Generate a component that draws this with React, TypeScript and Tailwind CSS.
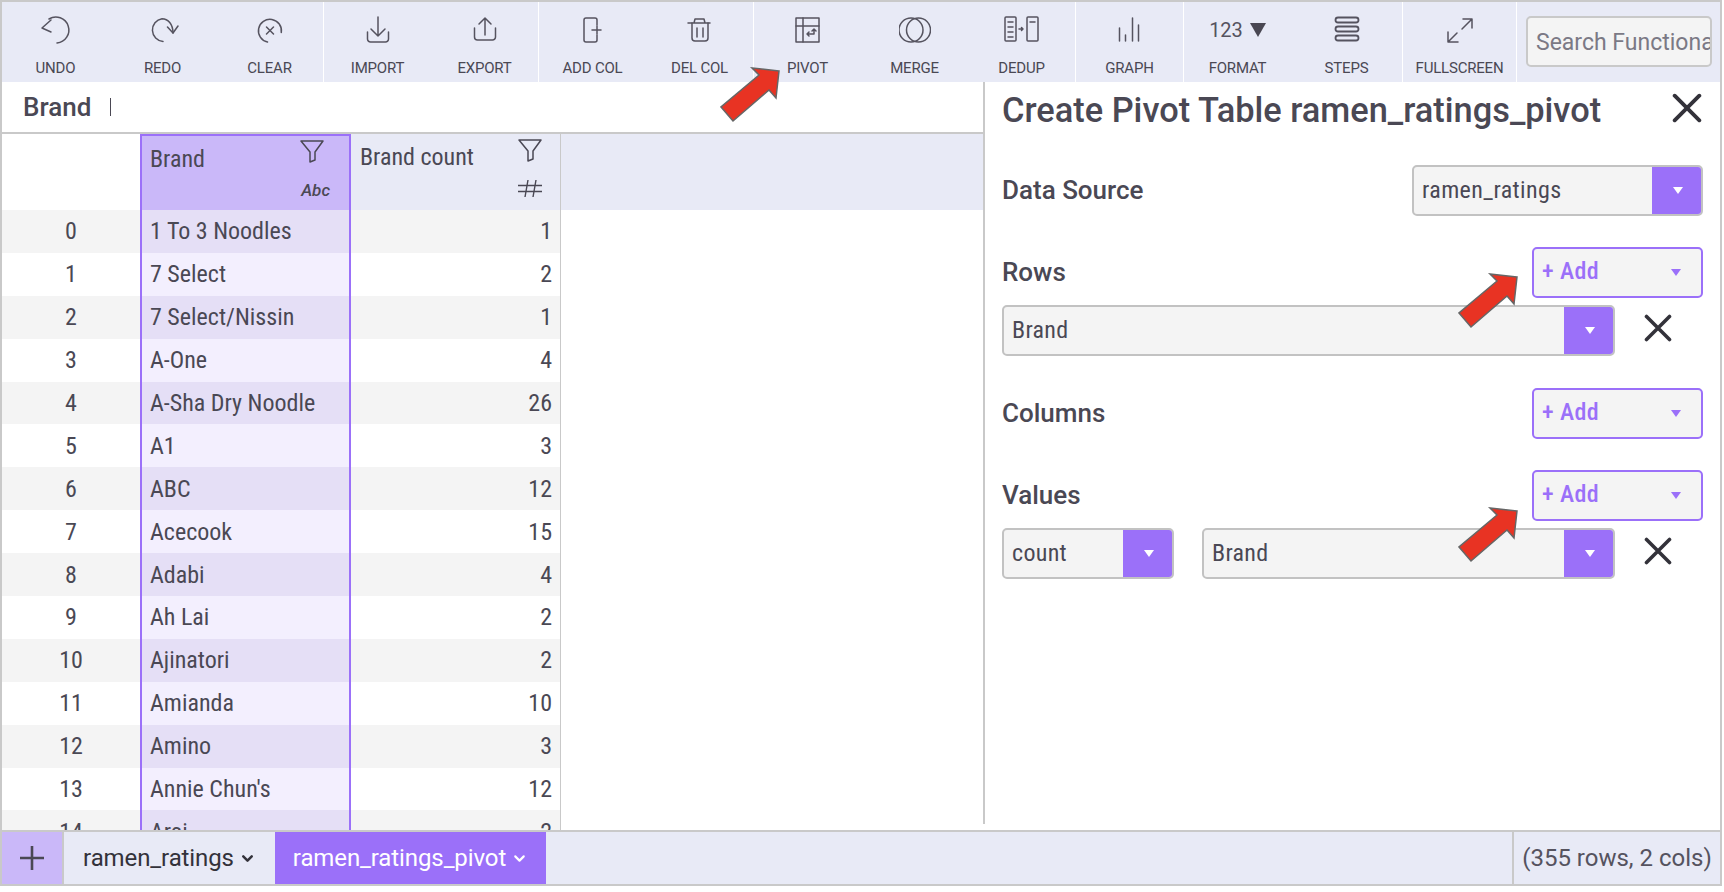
import { ChevronDown } from "lucide-react";
import type { ReactNode } from "react";

const font = "[font-family:Roboto,'Liberation_Sans',sans-serif]";

function Svg({ children, w = 32 }: { children: ReactNode; w?: number }) {
  return (
    <svg width={w} height={32} viewBox={`0 0 ${w} 32`} fill="none" stroke="#55535f" strokeWidth="1.5" strokeLinecap="round" strokeLinejoin="round">
      {children}
    </svg>
  );
}

const icons: Record<string, ReactNode> = {
  UNDO: (
    <Svg>
      <path d="M9 5 A13 13 0 1 1 17 29" />
      <path d="M11 6 L2 14 L11 18" />
    </Svg>
  ),
  REDO: (
    <Svg>
      <path d="M26 19 C26 10 21 4.7 15 4.7 A11.5 11.5 0 0 0 16 27.5" />
      <path d="M20.5 13 L26 19 L31 12" />
    </Svg>
  ),
  CLEAR: (
    <Svg>
      <path d="M27.3 18.5 A11.5 11.5 0 1 0 13.5 28" />
      <path d="M12.5 13 L19.5 20 M19.5 13 L12.5 20" />
    </Svg>
  ),
  IMPORT: (
    <Svg>
      <path d="M16 3 V22 M9 15 L16 22 L23 15" />
      <path d="M5.5 18 V25 a3 3 0 0 0 3 3 H23.5 a3 3 0 0 0 3 -3 V18" />
    </Svg>
  ),
  EXPORT: (
    <Svg>
      <path d="M16 21 V4 M10 10 L16 4 L22 10" />
      <path d="M5.5 14 V23 a3 3 0 0 0 3 3 H23.5 a3 3 0 0 0 3 -3 V14" />
    </Svg>
  ),
  "ADD COL": (
    <Svg>
      <path d="M20 11 V6 a2 2 0 0 0 -2 -2 H9 a2 2 0 0 0 -2 2 V26 a2 2 0 0 0 2 2 H18 a2 2 0 0 0 2 -2 V21" />
      <path d="M15 16 H24 M20 12 V20" />
    </Svg>
  ),
  "DEL COL": (
    <Svg>
      <path d="M4 9 H26 M10 9 L11 5 H20 L21 9" />
      <path d="M8 9 V24 a3 3 0 0 0 3 3 H21 a3 3 0 0 0 3 -3 V9" />
      <path d="M13 14 V23 M19 14 V23" />
    </Svg>
  ),
  PIVOT: (
    <Svg>
      <rect x="4" y="4" width="23" height="24" />
      <path d="M4 12 H27 M11 4 V28" />
      <path d="M22 15 V20 H15 M17 18 L15 20 L17 22 M20 17 L22 15 L24 17" />
    </Svg>
  ),
  MERGE: (
    <Svg>
      <circle cx="12" cy="16" r="12" />
      <circle cx="19.5" cy="16" r="12" />
    </Svg>
  ),
  DEDUP: (
    <Svg w={36}>
      <rect x="1" y="3" width="11" height="24" rx="1" />
      <rect x="23" y="3" width="11" height="24" rx="1" />
      <path d="M4 8 H9 M4 13 H9 M4 18 H9 M4 23 H9 M26 8 H31" />
      <path d="M15 15 H19 M17.5 13.5 L19 15 L17.5 16.5" />
    </Svg>
  ),
  GRAPH: (
    <Svg>
      <path d="M5.5 27 V14 M11.5 27 V21 M18.5 27 V4 M24.5 27 V11" />
    </Svg>
  ),
  STEPS: (
    <Svg>
      <rect x="4.5" y="3.5" width="23" height="5" rx="2.5" strokeWidth="1.8" />
      <rect x="4.5" y="12.5" width="23" height="5" rx="2.5" strokeWidth="1.8" />
      <rect x="4.5" y="21.5" width="23" height="5" rx="2.5" strokeWidth="1.8" />
    </Svg>
  ),
  FULLSCREEN: (
    <Svg>
      <path d="M28 5 L18 15 M19 5 H28 V14" />
      <path d="M4 28 L13 19 M4 18 V28 H14" />
    </Svg>
  ),
};

function ToolItem({ label, width = "w-[107px]" }: { label: string; width?: string }) {
  return (
    <div className={`flex shrink-0 flex-col items-center ${width}`}>
      <div className="flex h-[55px] items-center justify-center">
        {label === "FORMAT" ? (
          <div className="flex items-center gap-[7px] text-[20px] text-[#55535f]">
            <span>123</span>
            <span className="h-0 w-0 border-x-[8px] border-t-[14px] border-x-transparent border-t-[#494752]" />
          </div>
        ) : (
          icons[label]
        )}
      </div>
      <div className="text-[15px] leading-[22px] tracking-[-0.2px] text-[#4a4854]">{label}</div>
    </div>
  );
}

function Sep() {
  return <div className="h-full w-px shrink-0 bg-white" />;
}

function Toolbar() {
  return (
    <div className="flex h-[80px] shrink-0 items-stretch bg-[#e8eaf6]">
      <div className="flex"><ToolItem label="UNDO" /><ToolItem label="REDO" /><ToolItem label="CLEAR" /></div>
      <Sep />
      <div className="flex"><ToolItem label="IMPORT" /><ToolItem label="EXPORT" /></div>
      <Sep />
      <div className="flex"><ToolItem label="ADD COL" /><ToolItem label="DEL COL" /></div>
      <Sep />
      <div className="flex"><ToolItem label="PIVOT" /><ToolItem label="MERGE" /><ToolItem label="DEDUP" /></div>
      <Sep />
      <ToolItem label="GRAPH" />
      <Sep />
      <div className="flex"><ToolItem label="FORMAT" /><ToolItem label="STEPS" width="w-[111px]" /></div>
      <Sep />
      <ToolItem label="FULLSCREEN" width="w-[113px]" />
      <Sep />
      <div className="ml-[9px] mt-[14px] flex h-[51px] w-[186px] items-center overflow-hidden rounded-[5px] border-2 border-[#c9c9c9] bg-[#f4f4f4] pl-[8px] pt-[3px] text-[23px] whitespace-nowrap text-[#7b7985]">
        Search Functionality
      </div>
    </div>
  );
}

const rows: [number, string, number][] = [
  [0, "1 To 3 Noodles", 1],
  [1, "7 Select", 2],
  [2, "7 Select/Nissin", 1],
  [3, "A-One", 4],
  [4, "A-Sha Dry Noodle", 26],
  [5, "A1", 3],
  [6, "ABC", 12],
  [7, "Acecook", 15],
  [8, "Adabi", 4],
  [9, "Ah Lai", 2],
  [10, "Ajinatori", 2],
  [11, "Amianda", 10],
  [12, "Amino", 3],
  [13, "Annie Chun's", 12],
  [14, "Arai", 2],
];

function FilterIcon() {
  return (
    <svg width="24" height="24" viewBox="0 0 24 24" fill="none" stroke="#4a4854" strokeWidth="1.5" strokeLinejoin="round">
      <path d="M1 2 H23 L15 13 V21 L10 23 V13 Z" />
    </svg>
  );
}

function Grid() {
  return (
    <div className="flex min-w-0 flex-1 flex-col overflow-hidden">
      <div className="flex h-[50px] shrink-0 items-center gap-[19px] pl-[21px] text-[#4a4854]">
        <span className="text-[26px] font-medium [font-stretch:88%]">Brand</span>
        <span className="h-[18px] w-px bg-[#4a4854]" />
      </div>
      <div className="h-[2px] shrink-0 bg-[#c9c9c9]" />
      <div className="flex h-[76px] shrink-0">
        <div className="w-[138px] shrink-0 bg-white" />
        <div className="flex w-[211px] shrink-0 flex-col border-2 border-b-0 border-[#9b70f9] bg-[#cab8f9] pl-[8px] text-[#4a4854]">
          <div className="flex items-start justify-between pt-[3px]">
            <span className="mt-[6px] text-[24px] leading-[28px] [font-stretch:85%]">Brand</span>
            <div className="mr-[25px]"><FilterIcon /></div>
          </div>
          <span className="mr-[19px] mt-[9px] self-end text-[17px] font-medium italic leading-none">Abc</span>
        </div>
        <div className="flex w-[210px] shrink-0 flex-col border-r border-[#c9c9c9] bg-[#e8eaf6] pl-[9px] text-[#4a4854]">
          <div className="flex items-start justify-between pt-[4px]">
            <span className="mt-[5px] text-[24px] leading-[28px] [font-stretch:85%]">Brand count</span>
            <div className="mr-[18px]"><FilterIcon /></div>
          </div>
          <svg className="mr-[18px] mt-[9px] self-end" width="24" height="17" viewBox="0 0 24 17" fill="none" stroke="#4a4854" strokeWidth="1.4">
            <path d="M0 5.5 H24 M0 11.5 H24 M10 0 L7 17 M18 0 L15 17" />
          </svg>
        </div>
        <div className="flex-1 bg-[#e8eaf6]" />
      </div>
      <div className="flex-1 overflow-hidden">
        {rows.map(([i, brand, count]) => {
          const even = i % 2 === 0;
          return (
            <div key={i} className="flex h-[42.9px] text-[24px] text-[#4a4854] [font-stretch:85%]">
              <div className={`flex w-[138px] shrink-0 items-center justify-center ${even ? "bg-[#f4f4f4]" : "bg-white"}`}>{i}</div>
              <div className={`flex w-[211px] shrink-0 items-center border-x-2 border-[#9b70f9] pl-[8px] ${even ? "bg-[#e5dff6]" : "bg-[#f3effe]"}`}>{brand}</div>
              <div className={`flex w-[210px] shrink-0 items-center justify-end border-r border-[#c9c9c9] pr-[8px] ${even ? "bg-[#f4f4f4]" : "bg-white"}`}>{count}</div>
            </div>
          );
        })}
      </div>
    </div>
  );
}

function Caret({ color = "#ffffff" }: { color?: string }) {
  return <span className="h-0 w-0 border-x-[5px] border-t-[7px] border-x-transparent" style={{ borderTopColor: color }} />;
}

function Select({ value, className, textClass = "tracking-[0.3px]" }: { value: string; className: string; textClass?: string }) {
  return (
    <div className={`flex h-[51px] overflow-hidden rounded-[5px] border-2 border-[#c2c2c2] bg-[#f4f4f4] ${className}`}>
      <span className={`flex flex-1 items-center pb-[2px] pl-[8px] text-[24px] text-[#4a4854] [font-stretch:85%] ${textClass}`}>{value}</span>
      <span className="-my-[2px] -mr-[2px] flex w-[51px] items-center justify-center rounded-r-[5px] bg-[#9b70f9]">
        <Caret />
      </span>
    </div>
  );
}

function AddButton() {
  return (
    <div className="flex h-[51px] w-[171px] items-center justify-between rounded-[5px] border-2 border-[#9b70f9] bg-[#f4f4f4] pl-[8px] pr-[20px] text-[24px] font-medium tracking-[0.4px] text-[#9b70f9] [font-stretch:87%]">
      <span className="pb-[3px]">+ Add</span>
      <Caret color="#9b70f9" />
    </div>
  );
}

function CloseX({ size = 28 }: { size?: number }) {
  return (
    <svg width={size} height={size} viewBox="0 0 28 28" stroke="#33323a" strokeWidth="3.6" strokeLinecap="round">
      <path d="M2.5 2.5 L25.5 25.5 M25.5 2.5 L2.5 25.5" />
    </svg>
  );
}

const labelClass = "text-[26px] font-medium [font-stretch:88%]";

function Panel() {
  return (
    <div className="mb-[6px] flex w-[737px] shrink-0 flex-col border-l-2 border-[#c9c9c9] pl-[17px] pr-[17px] text-[#4a4854]">
      <div className="flex h-[53px] items-center justify-between pt-[4px]">
        <h1 className="text-[34.4px] font-medium leading-none whitespace-nowrap [font-stretch:88%]">Create Pivot Table ramen_ratings_pivot</h1>
        <div className="-mt-[6px] pr-[1px]"><CloseX size={30} /></div>
      </div>
      <div className="mt-[30px] flex items-center justify-between">
        <span className={labelClass}>Data Source</span>
        <Select value="ramen_ratings" className="w-[291px]" textClass="tracking-[0.4px]" />
      </div>
      <div className="mt-[31px] flex items-center justify-between">
        <span className={labelClass}>Rows</span>
        <AddButton />
      </div>
      <div className="mt-[7px] flex items-center">
        <Select value="Brand" className="w-[613px]" />
        <div className="-mt-[5px] ml-[29px] flex"><CloseX /></div>
      </div>
      <div className="mt-[32px] flex items-center justify-between">
        <span className={labelClass}>Columns</span>
        <AddButton />
      </div>
      <div className="mt-[31px] flex items-center justify-between">
        <span className={labelClass}>Values</span>
        <AddButton />
      </div>
      <div className="mt-[7px] flex items-center">
        <Select value="count" className="w-[172px]" />
        <Select value="Brand" className="ml-[28px] w-[413px]" />
        <div className="-mt-[5px] ml-[29px] flex"><CloseX /></div>
      </div>
    </div>
  );
}

function Footer() {
  return (
    <div className="flex h-[56px] shrink-0 items-stretch border-y-2 border-[#c9c9c9] bg-[#e8eaf6] text-[24px]">
      <div className="flex w-[62px] items-center justify-center border-r-2 border-[#c9c9c9] bg-[#cab8f9]">
        <svg width="24" height="24" viewBox="0 0 24 24" stroke="#4a4854" strokeWidth="2.6"><path d="M12 0 V24 M0 12 H24" /></svg>
      </div>
      <div className="flex w-[211px] items-center justify-center gap-[5px] tracking-[-0.1px] text-[#33323a]">
        ramen_ratings <ChevronDown size={17} strokeWidth={3.5} />
      </div>
      <div className="flex w-[271px] items-center justify-center gap-[5px] bg-[#9b70f9] tracking-[-0.1px] text-white">
        ramen_ratings_pivot <ChevronDown size={17} strokeWidth={3} />
      </div>
      <div className="flex-1" />
      <div className="flex w-[208px] items-center justify-center border-l-2 border-[#c9c9c9] text-[#55535f]">(355 rows, 2 cols)</div>
    </div>
  );
}

function Arrow({ className }: { className: string }) {
  return (
    <svg className={`absolute ${className}`} width="60" height="56" viewBox="0 0 60 56">
      <path d="M59 4 L32 1 L39 8 L1 40 L13 54 L49 23 L56 31 Z" fill="#e83323" stroke="#666666" strokeWidth="1.5" strokeLinejoin="miter" />
    </svg>
  );
}

export default function App() {
  return (
    <div className={`relative h-[892px] w-[1724px] overflow-hidden bg-white ${font}`}>
      <div className="flex h-[886px] w-[1722px] flex-col border-x-2 border-t-2 border-[#c9c9c9]">
        <Toolbar />
        <div className="flex min-h-0 flex-1">
          <Grid />
          <Panel />
        </div>
        <Footer />
      </div>
      <Arrow className="left-[720px] top-[67px]" />
      <Arrow className="left-[1458px] top-[273px]" />
      <Arrow className="left-[1458px] top-[507px]" />
    </div>
  );
}
